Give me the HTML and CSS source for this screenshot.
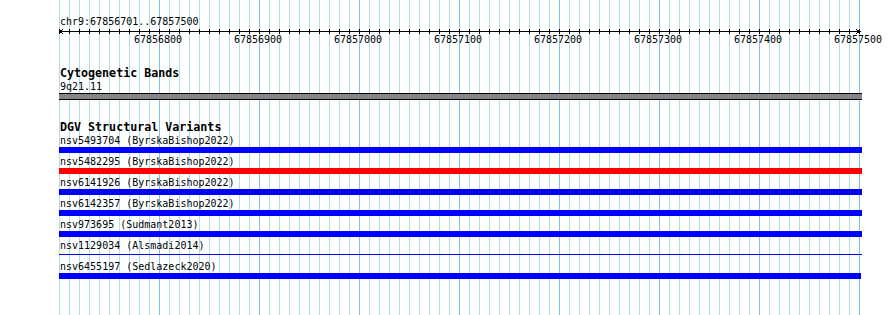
FILE: index.html
```html
<!DOCTYPE html>
<html lang="en">
<head>
  <meta charset="UTF-8">
  <title>chr9:67856701..67857500</title>
  <link rel="stylesheet" href="styles.css">
</head>
<body>

  <div class="panel">
    <div class="ruler-title">chr9:67856701..67857500</div>

    <svg class="ruler" width="803" height="5" viewBox="0 0 803 5">
      <defs>
        <pattern id="ticks" width="10" height="5" patternUnits="userSpaceOnUse">
          <rect x="0" y="0" width="1" height="5" fill="#000"/>
        </pattern>
      </defs>
      <rect x="0" y="0" width="801" height="5" fill="url(#ticks)"/>
      <rect x="0" y="2" width="801" height="1" fill="#000"/>
      <path d="M4 0.5 L0.5 2.5 L4 4.5 M797 0.5 L800.5 2.5 L797 4.5" stroke="#000" fill="none"/>
    </svg>

    <div class="ruler-labels">
      <span>67856800</span>
      <span>67856900</span>
      <span>67857000</span>
      <span>67857100</span>
      <span>67857200</span>
      <span>67857300</span>
      <span>67857400</span>
      <span>67857500</span>
    </div>

    <!-- Cytogenetic bands -->
    <div class="track band-track">
      <div class="track-title">Cytogenetic Bands</div>
      <div class="feature-label">9q21.11</div>
      <div class="band"></div>
    </div>

    <!-- DGV variants -->
    <div class="track sv-track">
      <div class="track-title">DGV Structural Variants</div>
      <div class="feature">
        <div class="feature-label">nsv5493704 (ByrskaBishop2022)</div>
        <div class="bar loss"></div>
      </div>
      <div class="feature">
        <div class="feature-label">nsv5482295 (ByrskaBishop2022)</div>
        <div class="bar gain"></div>
      </div>
      <div class="feature">
        <div class="feature-label">nsv6141926 (ByrskaBishop2022)</div>
        <div class="bar loss"></div>
      </div>
      <div class="feature">
        <div class="feature-label">nsv6142357 (ByrskaBishop2022)</div>
        <div class="bar loss"></div>
      </div>
      <div class="feature">
        <div class="feature-label">nsv973695 (Sudmant2013)</div>
        <div class="bar loss"></div>
      </div>
      <div class="feature">
        <div class="feature-label">nsv1129034 (Alsmadi2014)</div>
        <div class="bar thin"></div>
      </div>
      <div class="feature">
        <div class="feature-label">nsv6455197 (Sedlazeck2020)</div>
        <div class="bar loss short"></div>
      </div>
    </div>
  </div>

</body>
</html>
```

FILE: styles.css
```css
body {
  margin: 0;
  background: #fff;
  color: #000;
  font-family: "DejaVu Sans Mono", "Liberation Mono", monospace;
  font-size: 10px;
}

.panel {
  box-sizing: border-box;
  margin-left: 59px;
  width: 801px;
  height: 315px;
  padding-top: 15px;
  background-color: #fff;
  background-image:
    linear-gradient(#b0e0e6, #b0e0e6),
    repeating-linear-gradient(to right, #88bfe6 0 1px, transparent 1px 100px),
    repeating-linear-gradient(to right, #b0e0e6 0 1px, transparent 1px 10px);
  background-size: 1px 100%, 100% 100%, 100% 100%;
  background-repeat: no-repeat;
}

.ruler-title,
.feature-label {
  line-height: 13px;
  height: 13px;
  padding-left: 1px;
  white-space: nowrap;
}

.ruler {
  display: block;
  margin-top: 1px;
  shape-rendering: crispEdges;
}

.ruler-labels {
  display: flex;
  margin-top: -1px;
  padding-left: 49px;
  line-height: 13px;
}

.ruler-labels span {
  flex: 0 0 100px;
  text-align: center;
}

.track {
  margin-top: 21px;
}

.track-title {
  font-weight: bold;
  font-size: 11.67px;
  line-height: 13px;
  height: 13px;
  padding-left: 1px;
  white-space: nowrap;
}

.band {
  box-sizing: border-box;
  width: 803px;
  height: 7px;
  background: #848484;
  border-top: 1px solid #000;
  border-bottom: 1px solid #000;
}

.feature {
  height: 19px;
  margin-bottom: 2px;
}

.bar {
  width: 803px;
  height: 6px;
}

.bar.loss {
  background: #0000ff;
}

.bar.gain {
  background: #ff0000;
}

.bar.thin {
  height: 1px;
  margin-top: 2px;
  background: #0000ff;
}

.bar.short {
  width: 802px;
}
```
